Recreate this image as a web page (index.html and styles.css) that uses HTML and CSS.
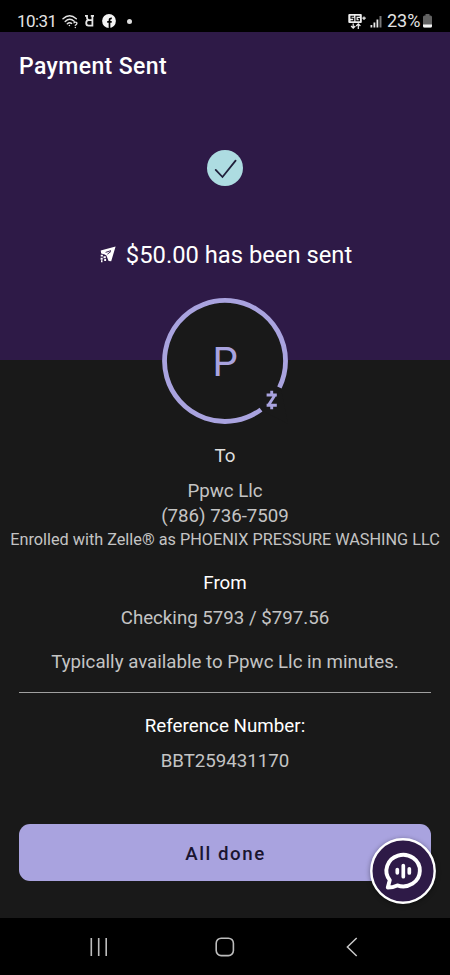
FILE: index.html
```html
<!DOCTYPE html>
<html lang="en">
<head>
<meta charset="utf-8">
<title>Payment Sent</title>
<link rel="stylesheet" href="styles.css">
</head>
<body>
<div class="phone">
  <header class="status">
    <span class="time">10:31</span>
    <svg class="wifi" width="17" height="15" viewBox="0 0 17 15" fill="none" stroke="#e4e4e4" stroke-width="1.4" stroke-linecap="round">
      <path d="M1 4.8Q7.5-1.3 14.3 4.8M3.2 7.5Q7.5 3.2 12.2 7.2M5.3 9.8Q7.3 7.8 9.6 9.4"/>
      <circle cx="7.4" cy="11.5" r=".8" fill="#e4e4e4" stroke="none"/>
      <path d="M12 8.8Q13.5 7.7 14.7 8.6Q15.5 10 13.3 11.3M13.3 13.5V13.6" stroke-width="1.3"/>
    </svg>
    <svg class="letter" width="9" height="12" viewBox="0 0 9 12" fill="none" stroke="#e4e4e4" stroke-width="1.8">
      <path d="M7.4 0V10.6H3.6Q1.2 10.6 1.2 8T3.6 5.2H7.4M4.2 5.2Q2 5 2 2.8V.9H0M5.8 .9H9"/>
    </svg>
    <svg class="facebook" width="14" height="14" viewBox="0 0 14 14">
      <circle cx="7" cy="7" r="6.9" fill="#f4f4f4"/>
      <path d="M7.5 14V6Q7.5 4.2 9.8 4.4M5.2 7.8H9.7" fill="none" stroke="#000" stroke-width="1.7"/>
    </svg>
    <span class="dot"></span>
    <span class="spacer"></span>
    <svg class="network" width="19" height="17" viewBox="0 0 19 17">
      <rect x=".3" y="1" width="13.5" height="9" rx="1" fill="#ededed"/>
      <path d="M6 3.2H3V5.2H5.7V7.8H2.6M11.7 3.2H8V7.8H11.4V5.6H9.8" fill="none" stroke="#000" stroke-width="1.1"/>
      <path d="M16 3.4V7M14.3 5.2H17.8M5.2 10.5V15M3.1 13L5.2 15.2L7.3 13M10.3 16V11M8.2 13L10.3 10.9L12.4 13" fill="none" stroke="#ededed" stroke-width="1.2"/>
    </svg>
    <svg class="signal" width="13" height="13" viewBox="0 0 13 13">
      <path d="M.5 10H2.3V12.5H.5ZM3.5 7.5H5.3V12.5H3.5ZM6.5 4.5H8.3V12.5H6.5Z" fill="#e6e6e6"/>
      <path d="M9.5 1H11.5V12.5H9.5Z" fill="#777"/>
    </svg>
    <span class="percent">23%</span>
    <svg class="battery" width="9" height="14" viewBox="0 0 9 14">
      <path d="M2.5 0H6.5V1.5H7.5Q9 1.5 9 3V12Q9 13.5 7.5 13.5H1.5Q0 13.5 0 12V3Q0 1.5 1.5 1.5H2.5Z" fill="#626262"/>
      <path d="M0 10.5H9V12Q9 13.5 7.5 13.5H1.5Q0 13.5 0 12Z" fill="#f4f4f4"/>
    </svg>
  </header>
  <section class="hero">
    <h1>Payment Sent</h1>
    <svg class="check" width="36" height="36" viewBox="0 0 36 36">
      <circle cx="18" cy="18" r="18" fill="#addce1"/>
      <path d="M8.7 19.9L15.5 27L28.6 10.6" fill="none" stroke="#20203b" stroke-width="1.8" stroke-linecap="round"/>
    </svg>
    <div class="amount">
      <svg width="16" height="17" viewBox="0 0 16 17">
        <path d="M15.6.5L.7 4.4L1.2 7.5L4.7 8.4L6.4 9.4L8.6 14.9L11.2 15.2Z" fill="#fff"/>
        <path d="M11 4.6L5.6 6.4M11 5.4L7.4 8.2" stroke="#2e1a47" stroke-width=".9"/>
        <path d="M.7 9.6H2.9M3.5 11.2H5.8M.6 12.7H2.7M4.2 14H6.1M1 15.2H2.5" stroke="#fff" stroke-width="1.9"/>
      </svg>
      <span>$50.00 has been sent</span>
    </div>
  </section>
  <main>
    <div class="avatar">
      <svg class="ring" width="126" height="126" viewBox="0 0 126 126">
        <circle cx="63" cy="63" r="61" fill="#191919"/>
        <path d="M101 113L119 91L126 126Z" fill="#191919"/>
        <path d="M99 111.6A60.5 60.5 0 1 1 117.4 89.5" fill="none" stroke="#a9a3df" stroke-width="4.8"/>
        <path d="M104.6 97H114.8M104.6 107.2H114.8M113 97L106.4 107.2M109.7 92.8V97M109.7 107V111.2" fill="none" stroke="#a9a3df" stroke-width="2.9"/>
      </svg>
      <span class="initial">P</span>
    </div>
    <h2 class="to">To</h2>
    <p class="name">Ppwc Llc</p>
    <p class="tel">(786) 736-7509</p>
    <p class="enrolled">Enrolled with Zelle® as PHOENIX PRESSURE WASHING LLC</p>
    <h2 class="from">From</h2>
    <p class="account">Checking 5793 / $797.56</p>
    <p class="timing">Typically available to Ppwc Llc in minutes.</p>
    <hr>
    <h2 class="ref">Reference Number:</h2>
    <p class="number">BBT259431170</p>
    <div class="action">
      <button class="done">All done</button>
      <button class="chat" aria-label="Chat">
        <svg width="66" height="66" viewBox="0 0 66 66" fill="none" stroke="#fff" stroke-linecap="round" stroke-linejoin="round">
          <circle cx="33" cy="33" r="31.7" fill="#2e1a47" stroke-width="2.4"/>
          <path d="M17.8 49.5L19.8 42.1A16.7 15.8 0 1 1 27.3 47.4Q22.8 49.5 17.8 49.5Z" stroke-width="3.9"/>
          <path d="M27.3 31.6V34.8M33.3 27.5V38.7M39.3 30.8V35" stroke-width="3.7"/>
        </svg>
      </button>
    </div>
  </main>
  <nav>
    <svg width="18" height="20" viewBox="0 0 18 20" stroke="#bdbdbd" stroke-width="1.6"><path d="M1.3 1V19M8.7 1V19M16.2 1V19"/></svg>
    <svg class="home" width="20" height="20" viewBox="0 0 20 20" fill="none" stroke="#bdbdbd" stroke-width="1.6"><rect x="1.2" y="1.2" width="17.2" height="17.4" rx="5"/></svg>
    <svg width="12" height="20" viewBox="0 0 12 20" fill="none" stroke="#c8c8c8" stroke-width="1.5"><path d="M10.7 1L1.4 10L10.7 19"/></svg>
  </nav>
</div>
</body>
</html>
```
FILE: styles.css
```css
* { box-sizing: border-box; }
body { margin: 0; background: #191919; font-family: Roboto, sans-serif; }
h1, h2, p { margin: 0; font-weight: 400; }
svg { display: block; flex: none; }
.phone { width: 450px; height: 975px; display: flex; flex-direction: column; overflow: hidden; }
.status { height: 32px; background: #000; display: flex; align-items: center; padding: 10px 18px 0 17px; color: #e4e4e4; }
.time { width: 40px; font-size: 17px; line-height: 20px; letter-spacing: -.6px; white-space: nowrap; }
.wifi { margin-left: 5px; }
.letter { margin-left: 6px; }
.facebook { margin-left: 8px; }
.dot { width: 5px; height: 5px; border-radius: 50%; background: #ddd; margin-left: 11px; }
.spacer { flex: 1; }
.signal { margin-left: 3px; }
.percent { width: 35px; margin-left: 4px; font-size: 18px; line-height: 20px; letter-spacing: 0; white-space: nowrap; }
.battery { margin-left: 1px; }
.hero { height: 328px; background: #2e1a47; display: flex; flex-direction: column; align-items: center; }
h1 { align-self: flex-start; margin: 20px 0 0 19px; font-size: 23px; line-height: 30px; font-weight: 500; color: #fff; letter-spacing: .4px; }
.check { margin-top: 68px; }
.amount { margin-top: 54px; padding-left: 2px; display: flex; align-items: center; gap: 10px; color: #fff; font-size: 23.75px; line-height: 30px; white-space: nowrap; }
.amount svg { margin-top: -2px; }
main { flex: 1; background: #191919; display: flex; flex-direction: column; align-items: center; color: #c4c4c4; font-size: 18.7px; line-height: 24px; white-space: nowrap; }
.avatar { position: relative; z-index: 1; width: 126px; height: 126px; margin-top: -62px; display: grid; place-items: center; }
.ring, .initial { grid-area: 1 / 1; }
.initial { color: #a9a3df; font-size: 40px; line-height: 48px; padding-top: 4px; }
h2 { font-size: 18.8px; line-height: 24px; color: #fff; }
.to { margin-top: 20px; color: #dedede; }
.name { margin-top: 11px; }
.tel { margin-top: 1px; }
.enrolled { font-size: 16.25px; }
.from { margin-top: 19px; }
.account { margin-top: 11px; }
.timing { margin-top: 20px; }
hr { width: 412px; height: 1px; margin: 18px 0 0; border: 0; background: #a0a0a0; }
.ref { margin-top: 21px; }
.number { margin-top: 11px; }
.action { width: 412px; margin-top: 51px; position: relative; }
button { font-family: inherit; border: 0; padding: 0; }
.done { display: block; width: 412px; height: 57px; border-radius: 11px; background: #a9a3df; color: #1a1530; font-size: 18.7px; font-weight: 500; letter-spacing: 1.55px; padding: 2px 0 0 1px; }
.chat { position: absolute; left: 351px; top: 14px; width: 66px; height: 66px; border-radius: 50%; background: none; box-shadow: 0 1px 5px #0006; }
nav { height: 57px; background: #000; display: flex; align-items: center; padding: 0 92px 0 90px; justify-content: space-between; }
.home { margin-right: 4px; }
```
